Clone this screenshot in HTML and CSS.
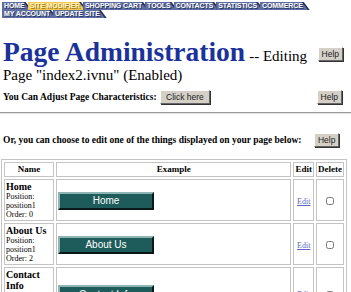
FILE: index.html
```html
<!DOCTYPE html>
<html lang="en">
<head>
  <meta charset="UTF-8" />
  <title>Page Administration</title>
  <link rel="stylesheet" href="styles.css">
</head>
<body>

  <div class="tabs">
    <div class="tab-row">
      <span class="tab"><span>HOME</span></span>
      <span class="tab active"><span>SITE MODIFIER</span></span>
      <span class="tab"><span>SHOPPING CART</span></span>
      <span class="tab"><span>TOOLS</span></span>
      <span class="tab"><span>CONTACTS</span></span>
      <span class="tab"><span>STATISTICS</span></span>
      <span class="tab"><span>COMMERCE</span></span>
    </div>
    <div class="tab-row">
      <span class="tab"><span>MY ACCOUNT</span></span>
      <span class="tab"><span>UPDATE SITE</span></span>
    </div>
  </div>

  <div class="title-row">
    <div class="title">
      <span class="big">Page Administration</span> <span class="sub">-- Editing</span><br>
      <span class="sub">Page "index2.ivnu" (Enabled)</span>
    </div>
    <button class="help">Help</button>
  </div>

  <div class="adjust-row">
    <div class="bold-text">You Can Adjust Page Characteristics: <button class="grey-btn">Click here</button></div>
    <button class="help">Help</button>
  </div>

  <hr class="rule">

  <div class="choose-row bold-text">
    Or, you can choose to edit one of the things displayed on your page below: <button class="help">Help</button>
  </div>

  <table class="items">
    <tr>
      <th class="col-name">Name</th>
      <th>Example</th>
      <th class="col-edit">Edit</th>
      <th class="col-del">Delete</th>
    </tr>
    <tr>
      <td class="name"><b>Home</b><small>Position:<br>position1<br>Order: 0</small></td>
      <td class="example"><button class="teal-btn">Home</button></td>
      <td class="center"><a href="#">Edit</a></td>
      <td class="center"><input type="checkbox"></td>
    </tr>
    <tr>
      <td class="name"><b>About Us</b><small>Position:<br>position1<br>Order: 2</small></td>
      <td class="example"><button class="teal-btn">About Us</button></td>
      <td class="center"><a href="#">Edit</a></td>
      <td class="center"><input type="checkbox"></td>
    </tr>
    <tr>
      <td class="name"><b>Contact Info</b><small>Position:<br>position1<br>Order: 3</small></td>
      <td class="example"><button class="teal-btn">Contact Info</button></td>
      <td class="center"><a href="#">Edit</a></td>
      <td class="center"><input type="checkbox"></td>
    </tr>
  </table>

</body>
</html>
```

FILE: styles.css
```css
body {
  margin: 0;
  font-family: 'Liberation Serif', 'Times New Roman', serif;
  color: #000;
  background: #fff;
}

/* tab strip */
.tabs {
  padding: 2px 0 0 2px;
}

.tab-row {
  display: flex;
  height: 8px;
}

.tab {
  display: block;
  height: 8px;
  margin-right: -4px;
  background: #27305a;
  clip-path: polygon(0 0, calc(100% - 6px) 0, 100% 100%, 0 100%);
}

.tab span {
  display: block;
  height: 8px;
  padding: 0 7px 0 2px;
  font-family: 'Liberation Sans', Arial, sans-serif;
  font-size: 7px;
  font-weight: bold;
  line-height: 8.5px;
  letter-spacing: -0.1px;
  color: #fff;
  background: #5e6ea0;
  clip-path: polygon(0 0, calc(100% - 8px) 0, calc(100% - 2px) 100%, 0 100%);
  text-shadow: 1px 1px 0 #2a3360;
}

.tab.active span {
  background: #f2c84e;
  color: #fff4c8;
  text-shadow: 1px 1px 0 #a07a1a;
}

/* heading */
.title-row {
  display: flex;
  justify-content: space-between;
  align-items: flex-start;
  padding: 19px 8px 0 3px;
}

.title {
  line-height: 15px;
}

.big {
  font-size: 27.5px;
  font-weight: bold;
  color: #1a329a;
  line-height: 30px;
}

.sub {
  font-size: 15px;
}

.title-row .help {
  margin-top: 10px;
}

.help, .grey-btn {
  font-family: 'Liberation Sans', Arial, sans-serif;
  font-size: 8.5px;
  height: 14px;
  padding: 0 3px;
  background: #d4d0c8;
  color: #222;
  border: 1px solid;
  border-color: #fff #666 #666 #fff;
  box-shadow: 1px 1px 0 #333;
}

.grey-btn {
  width: 50px;
  margin-left: 1px;
}

.bold-text {
  font-size: 9.5px;
  font-weight: bold;
}

.adjust-row {
  display: flex;
  justify-content: space-between;
  align-items: center;
  padding: 7px 9px 0 3px;
}

.rule {
  margin: 8px 0 0;
  border: none;
  border-top: 1px solid #999;
  border-bottom: 1px solid #e4e4e4;
}

.choose-row {
  padding: 19px 0 0 3px;
}

.choose-row .help {
  margin-left: 10px;
}

/* listing table */
.items {
  margin: 12px 0 0 1px;
  width: 346px;
  border: 1px solid #c4c4c4;
  border-spacing: 2px;
}

.items th, .items td {
  border: 1px solid #c4c4c4;
  padding: 1px;
}

.items th {
  font-size: 9px;
  height: 11px;
  line-height: 11px;
}

.col-name { width: 46px; }
.col-edit { width: 14px; }
.col-del { width: 24px; }

.name {
  font-size: 10px;
  line-height: 11px;
  vertical-align: top;
}

.name b {
  display: block;
}

.name small {
  display: block;
  font-size: 8px;
  line-height: 9px;
}

.example {
  padding: 0;
}

.center {
  text-align: center;
  vertical-align: middle;
  line-height: 10px;
}

.center a {
  font-size: 8px;
  color: #5a68c0;
}

.center input {
  width: 8px;
  height: 8px;
  margin: 0;
  vertical-align: middle;
}

.teal-btn {
  width: 96px;
  height: 18px;
  font-family: 'Liberation Sans', Arial, sans-serif;
  font-size: 10px;
  color: #fff;
  background: #1e5c5c;
  border: 2px solid;
  border-color: #8fb4b4 #0a1818 #0a1818 #8fb4b4;
  vertical-align: middle;
}
```
